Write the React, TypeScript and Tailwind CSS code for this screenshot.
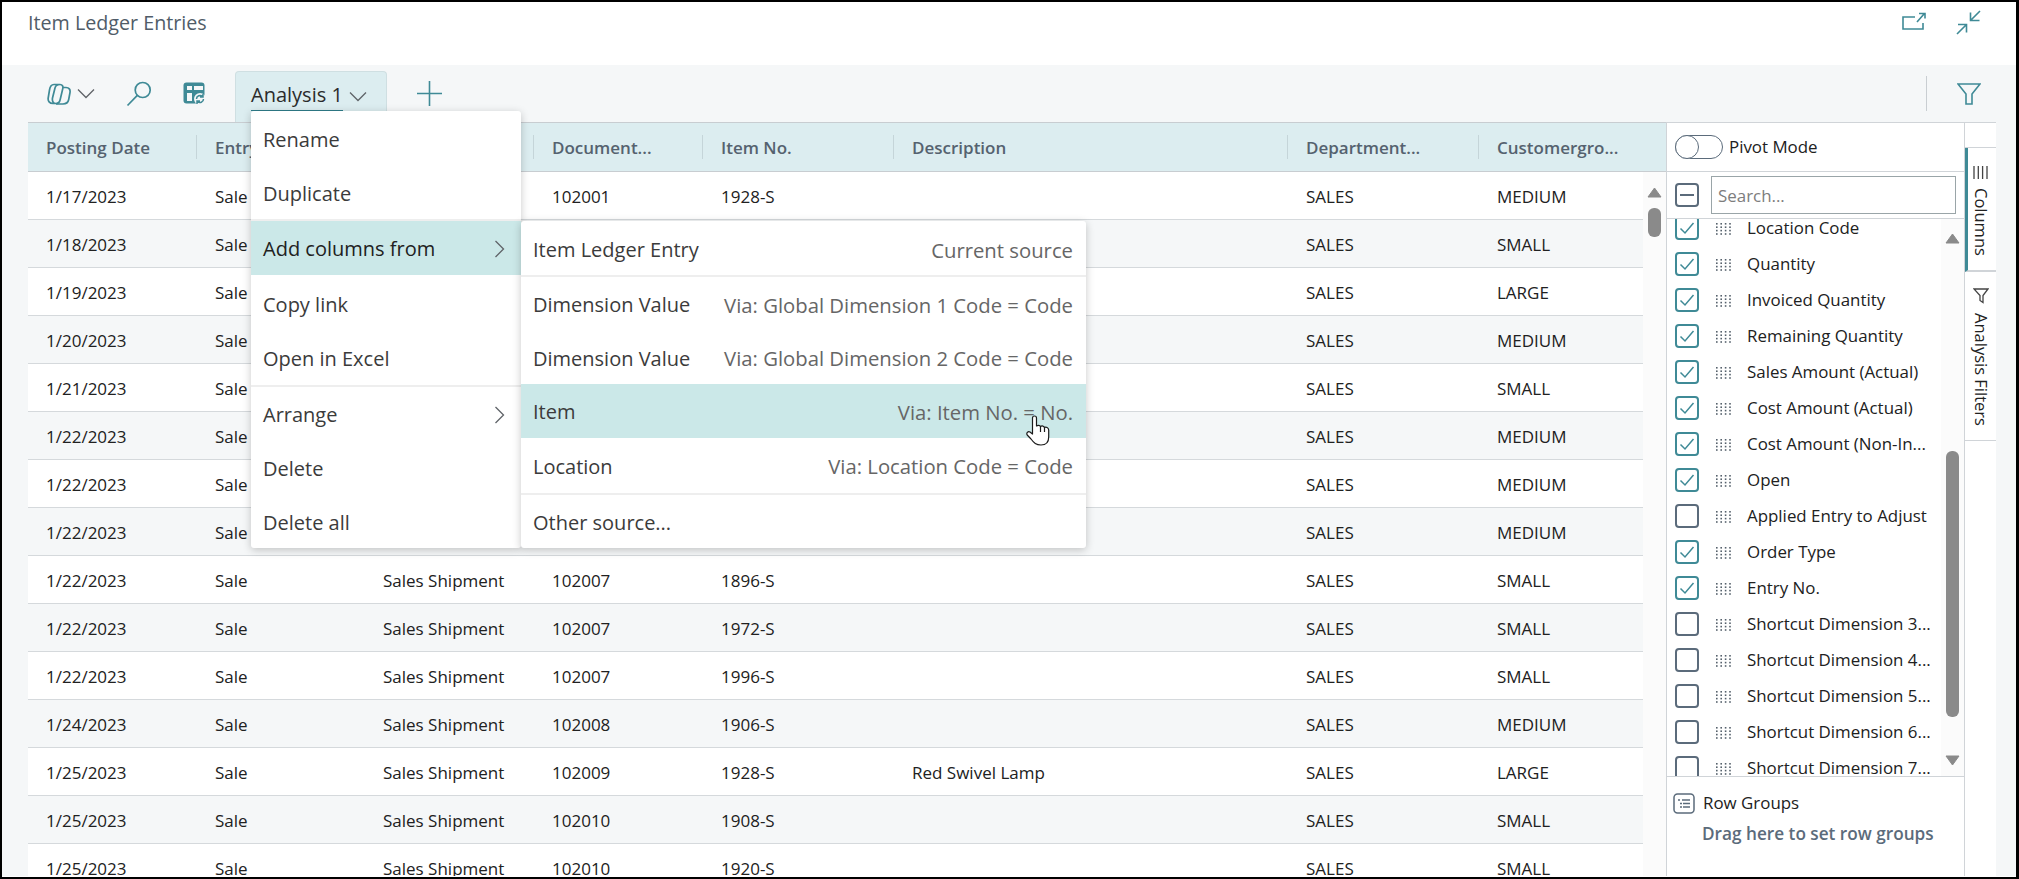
const gridCols = "grid grid-cols-[169px_168px_169px_169px_191px_394px_191px_164px]";

const rows = [
  ["1/17/2023", "Sale", "", "102001", "1928-S", "", "SALES", "MEDIUM"],
  ["1/18/2023", "Sale", "", "", "", "", "SALES", "SMALL"],
  ["1/19/2023", "Sale", "", "", "", "", "SALES", "LARGE"],
  ["1/20/2023", "Sale", "", "", "", "", "SALES", "MEDIUM"],
  ["1/21/2023", "Sale", "", "", "", "", "SALES", "SMALL"],
  ["1/22/2023", "Sale", "", "", "", "", "SALES", "MEDIUM"],
  ["1/22/2023", "Sale", "", "", "", "", "SALES", "MEDIUM"],
  ["1/22/2023", "Sale", "", "", "", "", "SALES", "MEDIUM"],
  ["1/22/2023", "Sale", "Sales Shipment", "102007", "1896-S", "", "SALES", "SMALL"],
  ["1/22/2023", "Sale", "Sales Shipment", "102007", "1972-S", "", "SALES", "SMALL"],
  ["1/22/2023", "Sale", "Sales Shipment", "102007", "1996-S", "", "SALES", "SMALL"],
  ["1/24/2023", "Sale", "Sales Shipment", "102008", "1906-S", "", "SALES", "MEDIUM"],
  ["1/25/2023", "Sale", "Sales Shipment", "102009", "1928-S", "Red Swivel Lamp", "SALES", "LARGE"],
  ["1/25/2023", "Sale", "Sales Shipment", "102010", "1908-S", "", "SALES", "SMALL"],
  ["1/25/2023", "Sale", "Sales Shipment", "102010", "1920-S", "", "SALES", "SMALL"],
];

const headers = ["Posting Date", "Entry Type", "", "Document...", "Item No.", "Description", "Department...", "Customergro..."];

const columns: [string, boolean][] = [
  ["Location Code", true],
  ["Quantity", true],
  ["Invoiced Quantity", true],
  ["Remaining Quantity", true],
  ["Sales Amount (Actual)", true],
  ["Cost Amount (Actual)", true],
  ["Cost Amount (Non-In...", true],
  ["Open", true],
  ["Applied Entry to Adjust", false],
  ["Order Type", true],
  ["Entry No.", true],
  ["Shortcut Dimension 3...", false],
  ["Shortcut Dimension 4...", false],
  ["Shortcut Dimension 5...", false],
  ["Shortcut Dimension 6...", false],
  ["Shortcut Dimension 7...", false],
];

function Chevron({ className }: { className?: string }) {
  return (
    <svg className={className} width="18" height="11" viewBox="0 0 18 11" fill="none" stroke="#5f6368" strokeWidth="1.3">
      <path d="M1 1.5l8 8 8-8" />
    </svg>
  );
}

function ChevronRight() {
  return (
    <svg width="11" height="18" viewBox="0 0 11 18" fill="none" stroke="#5f6368" strokeWidth="1.3">
      <path d="M1.5 1l8 8-8 8" />
    </svg>
  );
}

function Arrow({ down }: { down?: boolean }) {
  return (
    <svg width="15" height="11" viewBox="0 0 15 11" className="shrink-0">
      <path d={down ? "M1 1h13L7.5 10z" : "M1 10h13L7.5 1z"} fill="#8a8a8a" stroke="#8a8a8a" strokeLinejoin="round" />
    </svg>
  );
}

function Dots() {
  const dots = [];
  for (let x = 0; x < 4; x++) {
    for (let y = 0; y < 4; y++) {
      dots.push(<rect key={x + "-" + y} x={1 + x * 4.4} y={1 + y * 3.4} width="1.6" height="1.6" fill="#56626d" />);
    }
  }
  return (
    <svg width="17" height="13" viewBox="0 0 17 13" className="shrink-0">
      {dots}
    </svg>
  );
}

function ColumnRow({ label, checked }: { label: string; checked: boolean }) {
  return (
    <div className="flex h-[36px] shrink-0 items-center pl-[8px]">
      {checked ? (
        <div className="flex h-[24px] w-[24px] shrink-0 items-center justify-center rounded-[4px] border-2 border-[#3f8a96]">
          <svg width="16" height="14" viewBox="0 0 16 14" fill="none" stroke="#3f8a96" strokeWidth="1.5">
            <path d="M1.5 7.5l4.5 4.5 8.5-10" />
          </svg>
        </div>
      ) : (
        <div className="h-[24px] w-[24px] shrink-0 rounded-[4px] border-2 border-[#5b6b7b]" />
      )}
      <div className="ml-[16px] flex">
        <Dots />
      </div>
      <span className="ml-[15px] whitespace-nowrap">{label}</span>
    </div>
  );
}

function MenuItem({ label, sub, active, top }: { label: string; sub?: boolean; active?: boolean; top?: boolean }) {
  return (
    <div className={`flex h-[54px] items-center justify-between pl-[12px] pr-[16px] ${top ? "" : "pt-[2px]"} ${active ? "bg-[#cbe8e8] text-[#212121]" : "text-[#3b3b3b]"}`}>
      <span>{label}</span>
      {sub && <ChevronRight />}
    </div>
  );
}

function SourceItem({ label, via, active, className }: { label: string; via?: string; active?: boolean; className?: string }) {
  return (
    <div className={`flex items-center justify-between pl-[12px] pr-[13px] pt-[2px] ${active ? "bg-[#cbe8e8]" : ""} ${className ?? "h-[54px]"}`}>
      <span className="text-[#3b3b3b]">{label}</span>
      {via && <span className="text-[20.300px] text-[#666]">{via}</span>}
    </div>
  );
}

export default function App() {
  return (
    <div className="relative box-border h-[879px] w-[2019px] overflow-hidden border-t-2 border-r-[3px] border-b-2 border-l-2 border-black bg-white font-['Open_Sans',sans-serif] text-[#212121]">
      <div className="flex h-[63px] justify-between bg-white pl-[26px]">
        <h1 className="mt-[6px] text-[19.700px] leading-[30px] font-normal text-[#505c68]">Item Ledger Entries</h1>
        <div className="flex pr-[35px]">
          <svg className="mt-[10px]" width="24" height="20" viewBox="0 0 24 20" fill="none" stroke="#3f8a96" strokeWidth="1.6">
            <path d="M13 5H1v12h20v-6" />
            <path d="M15 10l7-8M17 1.5h6v5" />
          </svg>
          <svg className="ml-[30px] mt-[8px]" width="25" height="25" viewBox="0 0 25 25" fill="none" stroke="#3f8a96" strokeWidth="1.6">
            <path d="M24 1l-9 9M14.500 2.500v8h9" />
            <path d="M1 24l9-9M2 14.500h8.500v8" />
          </svg>
        </div>
      </div>

      <div className="flex h-[57px] items-center bg-[#f5f7f8] pl-[45px] pr-[35px]">
        <svg width="24" height="22" viewBox="0 0 24 22" fill="none" stroke="#3f8a96" strokeWidth="1.7">
          <path d="M7 1.500h6c-3 0-4.500 1.500-5 3.500L5.500 15c-.5 3 .5 5.500 3.500 5.500H6c-3.500 0-5.300-2.500-4.800-5.500L2.500 7C3 3.500 5 1.500 7 1.500z" />
          <path d="M13 1.500c2.500 0 3.300 2 2.800 4l-2.600 11c-.5 2.500-2.400 4-4.200 4" />
          <path d="M16 4.500h3c3 0 4.500 2 4 5l-1.300 7c-.5 2.500-2.700 4.500-5.700 4.500H9" />
        </svg>
        <Chevron className="ml-[6px]" />
        <svg className="ml-[31px]" width="26" height="26" viewBox="0 0 26 26" fill="none" stroke="#3f8a96" strokeWidth="1.7">
          <circle cx="16.700" cy="9" r="7.500" />
          <path d="M11.300 14.300L1.500 24.500" />
        </svg>
        <svg className="ml-[31px]" width="23" height="23" viewBox="0 0 23 23">
          <rect x="0.500" y="0.500" width="21" height="21" rx="3" fill="#3f8a96" />
          <rect x="4" y="4" width="5" height="4" fill="#f5f7f8" />
          <rect x="11" y="4" width="9" height="4" fill="#f5f7f8" />
          <rect x="4" y="11" width="5" height="8" fill="#f5f7f8" />
          <circle cx="17" cy="17" r="6" fill="#f5f7f8" />
          <path d="M13.500 17a3.500 3.500 0 0 1 6-2.500M20.500 17a3.500 3.500 0 0 1-6 2.500M20 12v3h-3M14 22v-3h3" fill="none" stroke="#3f8a96" strokeWidth="1.500" />
        </svg>
        <div className="ml-[29px] flex h-[51px] w-[152px] items-start self-end rounded-t-[4px] border border-b-0 border-[#cfdfe2] bg-[#dcedf0] pl-[15px] pt-[8px]">
          <span className="h-[31px] border-b border-[#2f7d8a] text-[20px] leading-[30px] font-medium text-[#2b2b2b]">Analysis 1</span>
          <Chevron className="ml-[6px] mt-[11px]" />
        </div>
        <svg className="ml-[30px]" width="25" height="25" viewBox="0 0 25 25" stroke="#3f8a96" strokeWidth="1.6">
          <path d="M12.500 0v25M0 12.500h25" />
        </svg>
        <div className="ml-auto h-[35px] w-px bg-[#c9ced2]" />
        <svg className="ml-[30px]" width="24" height="22" viewBox="0 0 24 22" fill="none" stroke="#3f8a96" strokeWidth="1.6">
          <path d="M1 1h22l-8 10v10H9V11z" />
        </svg>
      </div>

      <div className="flex h-[754px] overflow-hidden bg-[#f5f7f8] pl-[26px] pr-[20px]">
        {/* grid */}
        <div className="relative flex w-[1638px] flex-col bg-white text-[17px]">
          <div className="grid h-[50px] shrink-0 grid-cols-[169px_168px_169px_169px_191px_394px_191px_187px] border-y border-[#c8cdd1] bg-[#dcedf0] text-[17px] font-semibold text-[#55626f]">
            {headers.map((h, i) => (
              <div key={i} className="flex items-center justify-between pl-[18px] pt-[2px]">
                <span className="whitespace-nowrap">{h}</span>
                {i < headers.length - 1 && <span className="-mt-[2px] h-[24px] w-px bg-[#c5d5d9]" />}
              </div>
            ))}
          </div>
          <div className="flex min-h-0 flex-1">
            <div className="w-[1615px] shrink-0">
              {rows.map((r, i) => (
                <div key={i} className={`${gridCols} h-[48px] border-b border-[#d5d9dc] ${i % 2 === 0 ? "bg-white" : "bg-[#f5f7f8]"}`}>
                  {r.map((cell, j) => (
                    <div key={j} className="flex items-center whitespace-nowrap pl-[18px] pt-[2px]">
                      {cell}
                    </div>
                  ))}
                </div>
              ))}
            </div>
            <div className="flex w-[23px] shrink-0 flex-col items-center bg-[#fbfbfb] pt-[15px]">
              <Arrow />
              <div className="mt-[10px] h-[29px] w-[13px] rounded-[6px] bg-[#8a8a8a]" />
            </div>
          </div>
        </div>

        {/* columns tool panel */}
        <div className="flex w-[299px] shrink-0 flex-col border-x border-t border-[#d0d4d8] bg-white text-[16.900px]">
          <div className="flex h-[49px] shrink-0 items-center border-b border-[#d0d4d8] pl-[8px]">
            <div className="flex h-[24px] w-[48px] rounded-full border-[1.500px] border-[#5b6b7b]">
              <div className="-my-[1.500px] -ml-[1.500px] h-[24px] w-[24px] rounded-full border-[1.500px] border-[#5b6b7b] bg-white" />
            </div>
            <span className="ml-[6px]">Pivot Mode</span>
          </div>
          <div className="flex h-[47px] shrink-0 items-center border-b border-[#d0d4d8] pl-[8px]">
            <div className="flex h-[24px] w-[24px] items-center justify-center rounded-[4px] border-2 border-[#5b6b7b]">
              <div className="h-[2px] w-[14px] bg-[#5b6b7b]" />
            </div>
            <div className="ml-[12px] flex h-[38px] w-[245px] items-center border border-[#9aa5a8] pl-[6px] pt-[2px] text-[#7d7d7d]">Search...</div>
          </div>
          <div className="flex min-h-0 flex-1 overflow-hidden">
            <div className="-mt-[9px] flex min-w-0 flex-1 flex-col">
              {columns.map(([label, checked]) => (
                <ColumnRow key={label} label={label} checked={checked} />
              ))}
            </div>
            <div className="flex w-[23px] shrink-0 flex-col items-center bg-[#fbfbfb] pt-[14px]">
              <Arrow />
              <div className="mt-[207px] h-[266px] w-[13px] rounded-[6px] bg-[#8a8a8a]" />
              <div className="mt-[38px] flex">
                <Arrow down />
              </div>
            </div>
          </div>
          <div className="h-[100px] shrink-0 border-t border-[#d0d4d8] pl-[6px]">
            <div className="mt-[15px] flex h-[22px] items-center">
              <svg width="22" height="21" viewBox="0 0 22 21" fill="none" stroke="#5b6b7b" strokeWidth="1.500">
                <rect x="1" y="1" width="20" height="19" rx="3.500" />
                <path d="M5 7h2M9 7h8M7 10.500h2M10 10.500h7M7 14h2M10 14h7" />
              </svg>
              <span className="ml-[8px]">Row Groups</span>
            </div>
            <div className="ml-[29px] mt-[7px] whitespace-nowrap text-[17.200px] font-semibold text-[#5b6b7b]">Drag here to set row groups</div>
          </div>
        </div>

        {/* side tabs */}
        <div className="flex w-[31px] shrink-0 flex-col border-t border-[#d0d4d8] bg-white text-[16.500px]">
          <div className="h-[25px] shrink-0 border-b border-[#d0d4d8]" />
          <div className="flex h-[124px] shrink-0 flex-col items-center border-b-2 border-l-[3px] border-[#d0d4d8] border-l-[#3f8a96] pt-[18px] pr-[3px]">
            <svg width="15" height="13" viewBox="0 0 15 13" stroke="#444" strokeWidth="1.300">
              <path d="M1 0v13M5.300 0v13M9.600 0v13M14 0v13" />
            </svg>
            <span className="mt-[9px] [writing-mode:vertical-rl]">Columns</span>
          </div>
          <div className="flex h-[169px] shrink-0 flex-col items-center border-b border-[#d0d4d8] pt-[16px]">
            <svg width="16" height="16" viewBox="0 0 16 16" fill="none" stroke="#444" strokeWidth="1.300">
              <path d="M1 1h14L10 7.500v7l-3-2v-5z" />
            </svg>
            <span className="mt-[9px] whitespace-nowrap [writing-mode:vertical-rl]">Analysis Filters</span>
          </div>
        </div>
      </div>

      {/* context menu */}
      <div className="absolute left-[249px] top-[109px] h-[437px] w-[270px] overflow-hidden rounded-[3px] bg-white pt-[2px] text-[20px] shadow-[0_2px_8px_rgba(0,0,0,0.22)]">
        <MenuItem label="Rename" top />
        <div className="border-b-2 border-[#eeeeee]">
          <div className="-mb-[2px]">
            <MenuItem label="Duplicate" top />
          </div>
        </div>
        <MenuItem label="Add columns from" sub active />
        <div className="h-[2px]" />
        <MenuItem label="Copy link" />
        <MenuItem label="Open in Excel" />
        <div className="h-[2px] bg-[#eeeeee]" />
        <MenuItem label="Arrange" sub />
        <MenuItem label="Delete" />
        <MenuItem label="Delete all" />
      </div>

      {/* add columns submenu */}
      <div className="absolute left-[519px] top-[219px] h-[327px] w-[565px] overflow-hidden rounded-[3px] bg-white pt-[2px] text-[20px] shadow-[0_2px_8px_rgba(0,0,0,0.22)]">
        <SourceItem label="Item Ledger Entry" via="Current source" className="h-[54px] border-b-2 border-[#eeeeee]" />
        <SourceItem label="Dimension Value" via="Via: Global Dimension 1 Code = Code" />
        <SourceItem label="Dimension Value" via="Via: Global Dimension 2 Code = Code" className="h-[53px]" />
        <SourceItem label="Item" via="Via: Item No. = No." active />
        <SourceItem label="Location" via="Via: Location Code = Code" className="h-[55px]" />
        <div className="h-[2px] bg-[#eeeeee]" />
        <SourceItem label="Other source..." />
      </div>

      {/* mouse cursor */}
      <svg className="absolute left-[1024px] top-[413px]" width="24" height="32" viewBox="0 0 24 32" fill="#fff" stroke="#1a1a1a" strokeWidth="1.200" strokeLinejoin="round">
        <path d="M8.500 1c1.300 0 2 1 2 2v8c1-1 3.500-1 4 .5 1.500-1 3.500-.5 4 1 1.500-.7 4 0 4.200 2.500v7c0 5-2.700 8-7.700 8-5 0-7-2-10-6L1.200 20c-1.200-2 .8-4 2.800-3l2.500 2V3c0-1 .7-2 2-2z" />
        <path d="M14.500 11.500V17M18.500 12.500V17" fill="none" />
      </svg>
    </div>
  );
}
